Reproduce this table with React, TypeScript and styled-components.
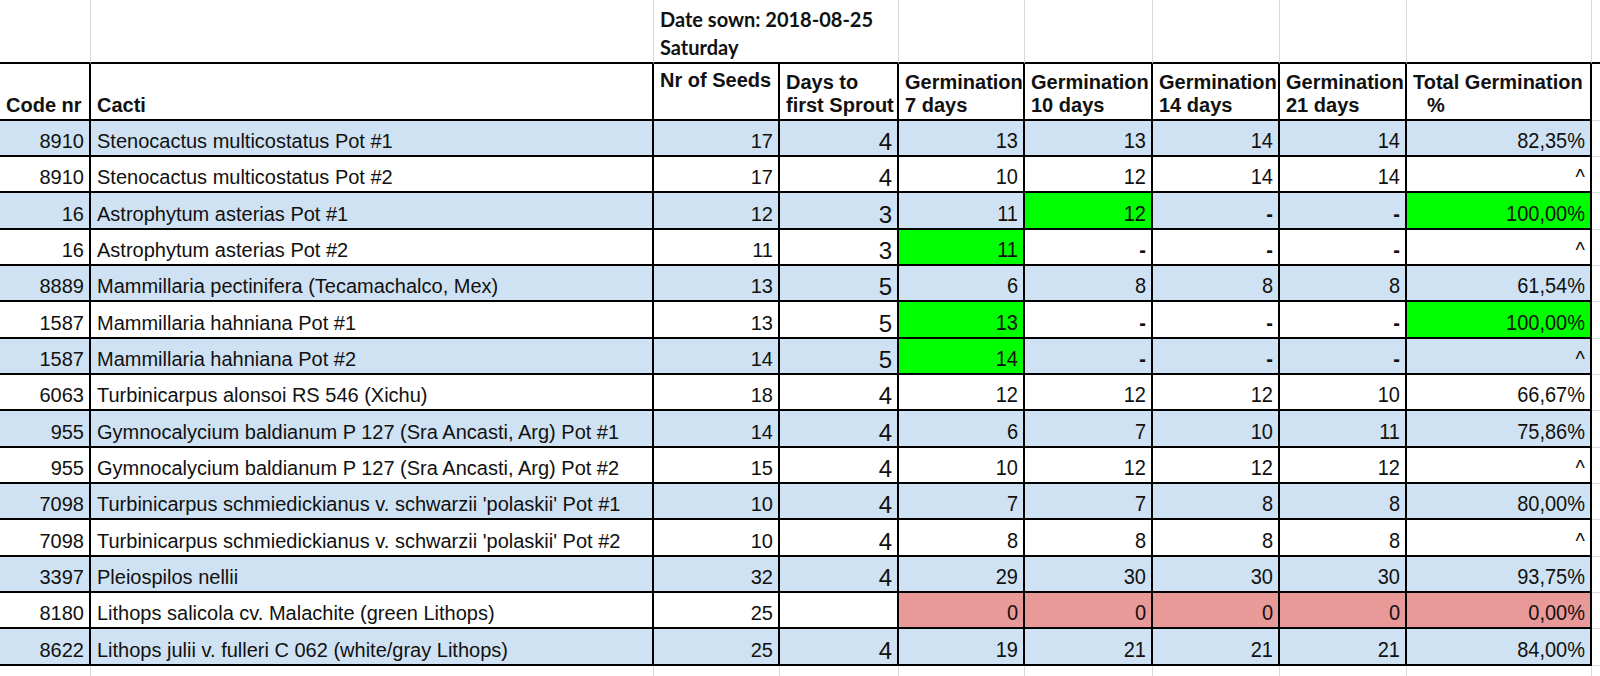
import React from "react";
import styled, { createGlobalStyle } from "styled-components";

const GlobalStyle = createGlobalStyle`
  html, body {
    margin: 0;
    padding: 0;
    background: #ffffff;
  }
  body {
    overflow: hidden;
  }
`;

type Fill = "blue" | "white" | "green" | "red";

const fills: Record<Fill, string> = {
  blue: "#cfe2f3",
  white: "#ffffff",
  green: "#00ff00",
  red: "#ea9999",
};

type Row = {
  cells: string[];
  fill: Fill;
  marks?: Record<number, Fill>;
};

const rows: Row[] = [
  { cells: ["8910", "Stenocactus multicostatus Pot #1", "17", "4", "13", "13", "14", "14", "82,35%"], fill: "blue" },
  { cells: ["8910", "Stenocactus multicostatus Pot #2", "17", "4", "10", "12", "14", "14", "^"], fill: "white" },
  { cells: ["16", "Astrophytum asterias Pot #1", "12", "3", "11", "12", "-", "-", "100,00%"], fill: "blue", marks: { 5: "green", 8: "green" } },
  { cells: ["16", "Astrophytum asterias Pot #2", "11", "3", "11", "-", "-", "-", "^"], fill: "white", marks: { 4: "green" } },
  { cells: ["8889", "Mammillaria pectinifera (Tecamachalco, Mex)", "13", "5", "6", "8", "8", "8", "61,54%"], fill: "blue" },
  { cells: ["1587", "Mammillaria hahniana Pot #1", "13", "5", "13", "-", "-", "-", "100,00%"], fill: "white", marks: { 4: "green", 8: "green" } },
  { cells: ["1587", "Mammillaria hahniana Pot #2", "14", "5", "14", "-", "-", "-", "^"], fill: "blue", marks: { 4: "green" } },
  { cells: ["6063", "Turbinicarpus alonsoi RS 546 (Xichu)", "18", "4", "12", "12", "12", "10", "66,67%"], fill: "white" },
  { cells: ["955", "Gymnocalycium baldianum P 127 (Sra Ancasti, Arg) Pot #1", "14", "4", "6", "7", "10", "11", "75,86%"], fill: "blue" },
  { cells: ["955", "Gymnocalycium baldianum P 127 (Sra Ancasti, Arg) Pot #2", "15", "4", "10", "12", "12", "12", "^"], fill: "white" },
  { cells: ["7098", "Turbinicarpus schmiedickianus v. schwarzii 'polaskii' Pot #1", "10", "4", "7", "7", "8", "8", "80,00%"], fill: "blue" },
  { cells: ["7098", "Turbinicarpus schmiedickianus v. schwarzii 'polaskii' Pot #2", "10", "4", "8", "8", "8", "8", "^"], fill: "white" },
  { cells: ["3397", "Pleiospilos nellii", "32", "4", "29", "30", "30", "30", "93,75%"], fill: "blue" },
  { cells: ["8180", "Lithops salicola cv. Malachite (green Lithops)", "25", "", "0", "0", "0", "0", "0,00%"], fill: "white", marks: { 4: "red", 5: "red", 6: "red", 7: "red", 8: "red" } },
  { cells: ["8622", "Lithops julii v. fulleri C 062 (white/gray Lithops)", "25", "4", "19", "21", "21", "21", "84,00%"], fill: "blue" },
];

// 9 sheet columns + the sliver of the next one at the right edge
const COLUMN_COUNT = 9;
const DAYS_COLUMN = 3;
const FIRST_COUNT_COLUMN = 4;

const Sheet = styled.div`
  display: grid;
  grid-template-columns: 91px 563px 126px 119px 126px 128px 127px 127px 185px 8px;
  grid-template-rows: 64px 57px repeat(5, 36px 36px 37px) 12px;
  width: 1600px;
  height: 676px;
  overflow: hidden;
  font-family: "Liberation Sans", Arial, sans-serif;
  color: #111111;
`;

const BlankCell = styled.div<{ $last?: boolean }>`
  border-right: ${(p) => (p.$last ? "none" : "1px solid #d9d9d9")};
  border-bottom: 2px solid #000000;
`;

const DateCell = styled.div`
  grid-column: span 2;
  padding: 5px 0 0 6px;
  border-right: 1px solid #d9d9d9;
  border-bottom: 2px solid #000000;
  font-family: Lato, "Open Sans", sans-serif;
  font-weight: 700;
  font-size: 20px;
  line-height: 28px;
  color: #111111;
`;

const HeadCell = styled.div<{ $top?: boolean }>`
  display: flex;
  flex-direction: column;
  justify-content: ${(p) => (p.$top ? "flex-start" : "flex-end")};
  padding: ${(p) => (p.$top ? "5px 0 0 6px" : "0 0 2px 6px")};
  border-right: 2px solid #000000;
  border-bottom: 2px solid #000000;
  font-weight: 700;
  font-size: 20px;
  line-height: 23px;
  white-space: nowrap;
  overflow: hidden;
`;

const Indent = styled.span`
  padding-left: 14px;
`;

const DataCell = styled.div<{ $fill: Fill; $left?: boolean; $large?: boolean; $dash?: boolean }>`
  display: flex;
  align-items: flex-end;
  justify-content: ${(p) => (p.$left ? "flex-start" : "flex-end")};
  padding: 0 5px 2px 6px;
  background: ${(p) => fills[p.$fill]};
  border-right: 2px solid #000000;
  border-bottom: 2px solid #000000;
  font-size: ${(p) => (p.$large ? "24px" : "20px")};
  font-weight: ${(p) => (p.$dash ? 700 : 400)};
  line-height: 23px;
  white-space: nowrap;
  overflow: hidden;
`;

// the count columns are drawn a little taller than wide in the sheet
const Value = styled.span<{ $tall?: boolean }>`
  display: inline-block;
  transform: ${(p) => (p.$tall ? "scaleY(1.12)" : "none")};
  transform-origin: 50% 80%;
`;

const EdgeCell = styled.div`
  border-bottom: 1px solid #d9d9d9;
`;

const FootCell = styled.div`
  border-right: 1px solid #d9d9d9;
`;

export default function App() {
  return (
    <>
      <GlobalStyle />
      <Sheet>
        {/* title row above the table */}
        <BlankCell />
        <BlankCell />
        <DateCell>
          Date sown: 2018-08-25
          <br />
          Saturday
        </DateCell>
        <BlankCell />
        <BlankCell />
        <BlankCell />
        <BlankCell />
        <BlankCell />
        <BlankCell $last />

        {/* column headings */}
        <HeadCell>Code nr</HeadCell>
        <HeadCell>Cacti</HeadCell>
        <HeadCell $top>Nr of Seeds</HeadCell>
        <HeadCell>
          <span>Days to</span>
          <span>first Sprout</span>
        </HeadCell>
        <HeadCell>
          <span>Germination</span>
          <span>7 days</span>
        </HeadCell>
        <HeadCell>
          <span>Germination</span>
          <span>10 days</span>
        </HeadCell>
        <HeadCell>
          <span>Germination</span>
          <span>14 days</span>
        </HeadCell>
        <HeadCell>
          <span>Germination</span>
          <span>21 days</span>
        </HeadCell>
        <HeadCell>
          <span>Total Germination</span>
          <Indent>%</Indent>
        </HeadCell>
        <EdgeCell />

        {rows.map((row, r) => (
          <React.Fragment key={r}>
            {row.cells.map((value, c) => (
              <DataCell
                key={c}
                $left={c === 1}
                $large={c === DAYS_COLUMN}
                $dash={value === "-"}
                $fill={row.marks?.[c] ?? row.fill}
              >
                <Value $tall={c >= FIRST_COUNT_COLUMN}>{value}</Value>
              </DataCell>
            ))}
            <EdgeCell />
          </React.Fragment>
        ))}

        {Array.from({ length: COLUMN_COUNT }, (_, i) => (
          <FootCell key={i} />
        ))}
      </Sheet>
    </>
  );
}
